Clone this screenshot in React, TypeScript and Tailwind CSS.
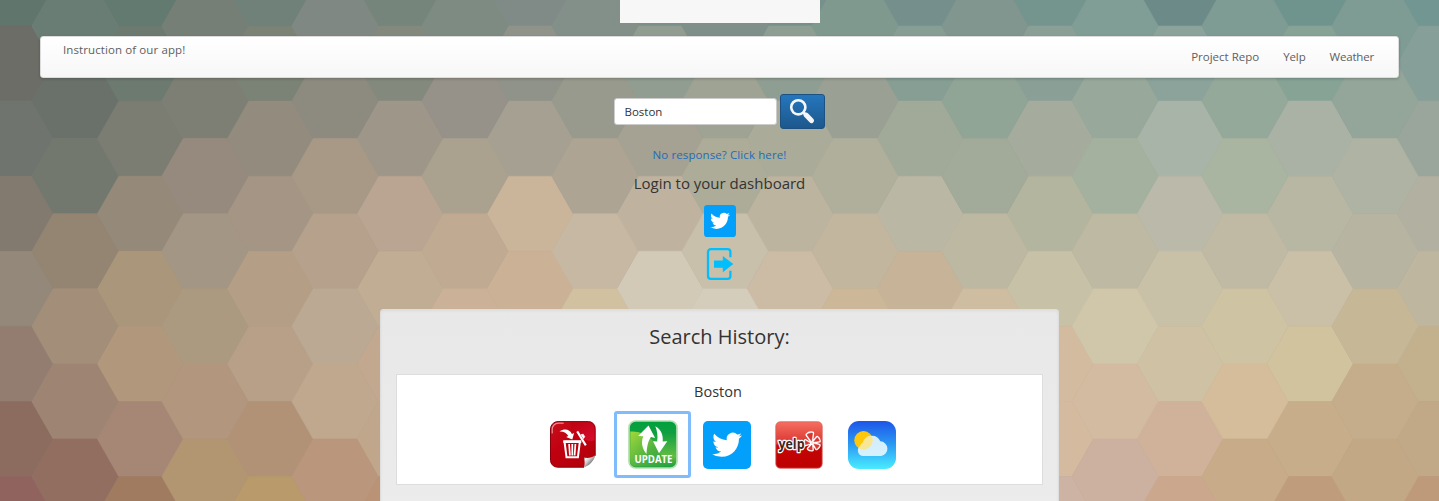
const ROWS_EVEN: string[] = [
  '60756b 627a70 70817a 76857b 808b88 7b908b 78908b 75908c 73958e 6c8b88 6f948d 729691',
  '6b6d66 6d7a70 7b8276 84897e 909389 919d91 8f9e92 869e93 8aa097 8ba39b 86a396 869f99',
  '6f756e 7b7c72 938b7d 9e9688 a6a092 a5a193 aaab99 a1a998 a5ac9d a8b4a7 aab2a6 9aa59b',
  '827a6f 958a79 a49585 b9a592 cab49a bfb3a0 bcb49f bab7a4 b3b59f bbbaaa b8b7a4 b2b0a0',
  '94887b aa977b b59e86 c1ad93 cbb297 d2cab7 ccbba5 c6b398 c7c1a8 c9c0a8 cabfa7 bfb6a0',
  '927d70 b1987d b89f87 c2a88f c9ae91 c9ae91 c9ae91 c9ae91 d3bb9f cfc1a3 d0c39e c3b18e',
  '8d6c60 a68776 b19277 c0a68a c9ae91 c9ae91 c9ae91 c9ae91 d4bba0 d0b199 c7ad8a c1a886',
  '90635f a07b60 b99a6b ba9377 c9ae91 c9ae91 c9ae91 c9ae91 ccb3a4 cba78d bf9c7c bf9a7a',
];

const ROWS_ODD: string[] = [
  '6a7d75 757f75 7f8882 7d8b82 838f89 7f908a 7f998f 80968f 809d96 7e9b94 7e9c94',
  '69716a 7d7f75 8d8a80 969189 979a8c 9fa393 9aa194 91a597 98a99c 95a99b 93a699',
  '73786e 958a7d a89987 aaa28f aea494 adac99 b0af9b a2aa99 a4b19f a9b5a0 afb3a4',
  '948472 a49684 b5a18c c0ab92 c7b8a3 c8c0ab c2b69f bdb8a1 bdb9a2 c0baa5 b7b4a1',
  'a38e79 ac9a80 bca993 cbb197 d2c1a1 d5cdbb ccb898 cfbda2 d0c6a9 cec3a2 c6b797',
  '9e8473 b2967e c0a88e c9ae91 c9ae91 c9ae91 c9ae91 c9ae91 d3bba1 d5bd9b c5ad8b',
  '926e61 b29671 ba967c c9ae91 c9ae91 c9ae91 c9ae91 c9ae91 ccb1a0 c8ab88 c2a885',
];

const HEX_HEIGHT = 75.1;

function hexPoints(cx: number, top: number) {
  const mid = top + HEX_HEIGHT / 2;
  const bottom = top + HEX_HEIGHT;
  return `${cx - 21.8},${top} ${cx + 21.8},${top} ${cx + 43.2},${mid} ${cx + 21.8},${bottom} ${cx - 21.8},${bottom} ${cx - 43.2},${mid}`;
}

function HexBackground() {
  const draw = (rows: string[], x0: number, y0: number) =>
    rows.flatMap((row, r) =>
      row.split(' ').map((c, i) => (
        <polygon
          key={`${x0}-${r}-${i}`}
          points={hexPoints(x0 + i * 130, y0 + r * HEX_HEIGHT)}
          fill={`#${c}`}
          stroke={`#${c}`}
          strokeWidth="0.6"
        />
      )),
    );
  return (
    <svg className="absolute inset-0" width="1439" height="501" viewBox="0 0 1439 501" aria-hidden="true">
      {draw(ROWS_EVEN, 10, -49.1)}
      {draw(ROWS_ODD, 75, -11.6)}
    </svg>
  );
}

function TwitterIcon({ size }: { size: number }) {
  return (
    <svg width={size} height={size} viewBox="0 0 48 48">
      <rect width="48" height="48" rx="5" fill="#03a0fb" />
      <g transform="translate(9.2 8.9) scale(1.24)">
        <path
          fill="#fff"
          d="M23.953 4.57a10 10 0 01-2.825.775 4.958 4.958 0 002.163-2.723c-.951.555-2.005.959-3.127 1.184a4.92 4.92 0 00-8.384 4.482C7.69 8.095 4.067 6.13 1.64 3.162a4.822 4.822 0 00-.666 2.475c0 1.71.87 3.213 2.188 4.096a4.904 4.904 0 01-2.228-.616v.06a4.923 4.923 0 003.946 4.827 4.996 4.996 0 01-2.212.085 4.936 4.936 0 004.604 3.417 9.867 9.867 0 01-6.102 2.105c-.39 0-.779-.023-1.17-.067a13.995 13.995 0 007.557 2.209c9.053 0 13.998-7.496 13.998-13.985 0-.21 0-.42-.015-.63A9.935 9.935 0 0024 4.59z"
        />
      </g>
    </svg>
  );
}

function SearchIcon() {
  return (
    <svg width="26" height="26" viewBox="0 0 26 26">
      <circle cx="9.3" cy="9.3" r="7.1" fill="none" stroke="#f4f7fa" strokeWidth="2.6" />
      <path d="M14.4 14.4l2.4 2.4" stroke="#f4f7fa" strokeWidth="2.8" />
      <path d="M17.1 17.1l5.3 5.5" stroke="#f4f7fa" strokeWidth="5" strokeLinecap="round" />
    </svg>
  );
}

function LogoutIcon() {
  return (
    <svg width="32" height="32" viewBox="0 0 32 32">
      <path
        d="M26.4 9.3V4a2.8 2.8 0 0 0-2.8-2.8H6.8A2.8 2.8 0 0 0 4 4v24a2.8 2.8 0 0 0 2.8 2.8h16.8a2.8 2.8 0 0 0 2.8-2.8v-5.3"
        fill="none"
        stroke="#00bffc"
        strokeWidth="2.3"
      />
      <path d="M10 12.6h8.8V7.9L29.3 16 18.8 24.3V19.8H10z" fill="#00bffc" />
    </svg>
  );
}

function TrashIcon() {
  return (
    <svg width="48" height="48" viewBox="0 0 48 48">
      <defs>
        <linearGradient id="trash-red" x1="0" y1="0" x2="0.7" y2="1">
          <stop offset="0" stopColor="#c8101c" />
          <stop offset="0.5" stopColor="#c00010" />
          <stop offset="1" stopColor="#b4000c" />
        </linearGradient>
        <linearGradient id="trash-shine" x1="0" y1="0" x2="1" y2="1">
          <stop offset="0" stopColor="#b8000e" />
          <stop offset="1" stopColor="#e0123a" />
        </linearGradient>
        <linearGradient id="trash-curl" x1="0" y1="0" x2="0.8" y2="0.8">
          <stop offset="0.1" stopColor="#8d8d8d" />
          <stop offset="0.3" stopColor="#f6f6f6" />
          <stop offset="0.55" stopColor="#c4c4c4" />
          <stop offset="0.75" stopColor="#8a8a8a" />
        </linearGradient>
      </defs>
      <path
        d="M8 .6h30.5a6.7 6.7 0 0 1 6.7 6.7V34.5L34 46.2H7.5a7 7 0 0 1-7-7V8A7.4 7.4 0 0 1 8 .6z"
        fill="url(#trash-red)"
        stroke="#8c000b"
        strokeWidth="1"
      />
      <path d="M20 1.4h18a6.5 6.5 0 0 1 6.5 6.5v11.5C35 22 26 14 20 1.4z" fill="url(#trash-shine)" opacity="0.7" />
      <path d="M2.2 12V8.2a6 6 0 0 1 6-6h5" fill="none" stroke="#f3a4a8" strokeWidth="1.2" strokeLinecap="round" opacity="0.85" />
      <path d="M33.8 46.4c1.2-3.2 1-6.4.2-9.9 3.6.8 7.7.5 11.3-2.2-1 5-5.5 10.5-11.5 12.1z" fill="url(#trash-curl)" />
      <path d="M14.5 20.5l2 15.7h11.4l2-15.7z" fill="none" stroke="#fff" strokeWidth="2" />
      <path d="M13.3 20.7h18" stroke="#fff" strokeWidth="2.6" />
      <path d="M19.1 23l.8 11.5M25.4 23l-.8 11.5M22.3 23v11.5" stroke="#fff" strokeWidth="1.7" />
      <path d="M9.5 10.4c5-3.4 10.3-2.4 12.4 2.6l2.2-1-1.8 6.6-6.2-2.5 2.2-1c-1.5-3.2-4.4-4.9-8.8-4.7z" fill="#fff" />
      <path d="M27.2 10.4l8.6 14" stroke="#fff" strokeWidth="2.1" />
      <path d="M30.8 13.8l2.4-.6 1.5 2.5-1.3 2" fill="#fff" stroke="#fff" strokeWidth="0.8" />
    </svg>
  );
}

function UpdateIcon() {
  return (
    <svg width="50" height="49" viewBox="0 0 50 49">
      <defs>
        <linearGradient id="update-green" x1="0" y1="0" x2="0" y2="1">
          <stop offset="0" stopColor="#00a13e" />
          <stop offset="0.25" stopColor="#0f9e40" />
          <stop offset="0.75" stopColor="#62bd42" />
          <stop offset="1" stopColor="#169d40" />
        </linearGradient>
        <linearGradient id="update-lime" x1="0" y1="0" x2="1" y2="1">
          <stop offset="0" stopColor="#a2d83a" />
          <stop offset="0.6" stopColor="#4cb13f" />
          <stop offset="1" stopColor="#2da43f" />
        </linearGradient>
      </defs>
      <rect x="1" y="1" width="48" height="47" rx="6.5" fill="url(#update-green)" stroke="#b4dfb0" strokeWidth="1.7" />
      <path d="M2.3 11.5c16-1 29 10 34 35H8c-4 0-5.7-2.5-5.7-6z" fill="url(#update-lime)" />
      <path d="M20.5 5.5l6.6 12.4-4.2-.8c-3 4.6-4 9.7-4.4 17-4.8-6-5.5-12-3.3-17.8l-5.1-.3z" fill="#fff" />
      <path d="M27.3 6.2c5.8 3.4 8 8.4 7.4 15.3l4.6-.2-8.3 12-6-12 4.2.1c.7-5.4.2-10.2-1.9-15.2z" fill="#fff" />
      <text
        x="6.5"
        y="43.4"
        textLength="38"
        lengthAdjust="spacingAndGlyphs"
        fill="#fff"
        fontFamily="'Open Sans', sans-serif"
        fontWeight="700"
        fontSize="10.4"
      >
        UPDATE
      </text>
    </svg>
  );
}

function YelpIcon() {
  const petals = [
    'M36.6 20.2l-4.6-6.4c1.4-1.5 3.7-2.2 5.6-1.7z',
    'M38.8 20.8l3.3-4.4c1.3.9 2.1 2.2 2.2 3.6z',
    'M38.8 22.9l5.4 1.4c-.4 1.7-1.3 2.7-2.7 3.4z',
    'M36.9 24l.4 5c-1.5.1-2.9-.3-4-1.3z',
    'M35 22.3l-4.6 1.5c-.5-1.3-.5-3 0-4.2z',
  ].join('');
  return (
    <svg width="48" height="48" viewBox="0 0 48 48">
      <defs>
        <linearGradient id="yelp-red" x1="0" y1="0" x2="0" y2="1">
          <stop offset="0" stopColor="#f4705f" />
          <stop offset="0.48" stopColor="#da3330" />
          <stop offset="0.5" stopColor="#c60606" />
          <stop offset="1" stopColor="#bd0000" />
        </linearGradient>
      </defs>
      <rect x="0.8" y="0.8" width="46.4" height="46.4" rx="4.5" fill="url(#yelp-red)" stroke="#d8605a" strokeWidth="0.8" />
      <path d={petals} fill="#fff" stroke="#fff" strokeWidth="3.2" strokeLinejoin="round" />
      <path d={petals} fill="#d83530" stroke="#d83530" strokeWidth="0.5" strokeLinejoin="round" />
      <text
        x="3.5"
        y="27.6"
        textLength="26"
        lengthAdjust="spacingAndGlyphs"
        fontFamily="'Open Sans', sans-serif"
        fontWeight="700"
        fontSize="14.5"
        fill="#3f2424"
        stroke="#fff"
        strokeWidth="2.6"
        strokeLinejoin="round"
        paintOrder="stroke"
      >
        yelp
      </text>
    </svg>
  );
}

function WeatherIcon() {
  const cloud =
    'M15.2 35a5.5 5.5 0 0 1-3-10A5.3 5.3 0 0 1 15.1 21.5 9.1 9.1 0 0 1 32.3 20.3a7.4 7.4 0 0 1 .9 14.7z';
  return (
    <svg width="48" height="48" viewBox="0 0 48 48">
      <defs>
        <linearGradient id="weather-sky" x1="0" y1="0" x2="0" y2="1">
          <stop offset="0" stopColor="#1d55e8" />
          <stop offset="0.5" stopColor="#2b9bf4" />
          <stop offset="1" stopColor="#4aecff" />
        </linearGradient>
        <clipPath id="weather-sun">
          <circle cx="15.5" cy="19.3" r="9.2" />
        </clipPath>
      </defs>
      <rect width="48" height="48" rx="11" fill="url(#weather-sky)" />
      <circle cx="15.5" cy="19.3" r="9.2" fill="#fec70b" />
      <path d={cloud} fill="#e0f3fc" fillOpacity="0.94" />
      <path d={cloud} fill="#f6e695" clipPath="url(#weather-sun)" />
    </svg>
  );
}

export default function App() {
  return (
    <div className="relative h-[501px] w-[1439px] overflow-hidden bg-[#8f8e80] font-['Open_Sans','Noto_Sans',sans-serif] text-[#333]">
      <HexBackground />
      <div className="relative flex flex-col items-center">
        <div className="h-[23px] w-[200px] bg-[#f7f7f7]" />

        <nav className="mt-[13px] flex h-[42px] w-[1359px] justify-between rounded-[3px] border border-[#dcdcdc] bg-linear-to-b from-white to-[#f7f7f7] text-[11.5px] leading-[18px] text-[#606060] shadow-[0_1px_3px_rgba(0,0,0,0.2)]">
          <p className="ml-[22px] mt-[4px] tracking-[0.1px]">Instruction of our app!</p>
          <ul className="mr-[24px] mt-[11px] flex gap-[24px] font-medium">
            <li>Project Repo</li>
            <li className="tracking-[-0.1px]">Yelp</li>
            <li className="tracking-[-0.2px]">Weather</li>
          </ul>
        </nav>

        <form className="mt-[16px] flex h-[35px] items-center gap-[3px]" onSubmit={(e) => e.preventDefault()}>
          <input
            className="h-[27px] w-[163px] rounded-[3px] border border-[#ccc] bg-white px-[9.5px] text-[11.5px] text-[#333] outline-none"
            defaultValue="Boston"
            aria-label="City"
          />
          <button
            className="flex h-[35px] w-[45px] items-start rounded-[3px] border border-[#1b5283] bg-linear-to-b from-[#2576bd] to-[#1d588c] pl-[8px] pt-[3px]"
            aria-label="Search"
          >
            <SearchIcon />
          </button>
        </form>

        <a className="mt-[17px] text-[11.5px] leading-[18px] tracking-[0.1px] text-[#1c6cba]" href="#">
          No response? Click here!
        </a>
        <p className="mt-[8px] text-[15px] leading-[22px]">Login to your dashboard</p>
        <div className="mt-[11px]">
          <TwitterIcon size={32} />
        </div>
        <div className="mt-[11px]">
          <LogoutIcon />
        </div>

        <section className="mt-[29px] flex h-[220px] w-[679px] flex-col items-center rounded-[3px] border border-[#dedede] bg-linear-to-b from-[#e8e8e8] to-[#ececec] shadow-[inset_0_1px_3px_rgba(0,0,0,0.05)]">
          <h2 className="mt-[13px] text-[20px] leading-[28px]">Search History:</h2>
          <div className="mt-[23px] h-[111px] w-[647px] border border-[#ddd] bg-white">
            <p className="mt-[6px] pr-[3px] text-center text-[14.5px] leading-[22px]">Boston</p>
            <div className="ml-[153px] mt-[8px] flex h-[68px] items-center">
              <TrashIcon />
              <button
                className="ml-[16px] flex h-[67px] w-[77px] items-center justify-center self-start rounded-[3px] border-[3px] border-[#80bbfc] bg-white"
                aria-label="Update"
              >
                <UpdateIcon />
              </button>
              <div className="ml-[12px]">
                <TwitterIcon size={48} />
              </div>
              <div className="ml-[24px]">
                <YelpIcon />
              </div>
              <div className="ml-[25px]">
                <WeatherIcon />
              </div>
            </div>
          </div>
        </section>
      </div>
    </div>
  );
}
